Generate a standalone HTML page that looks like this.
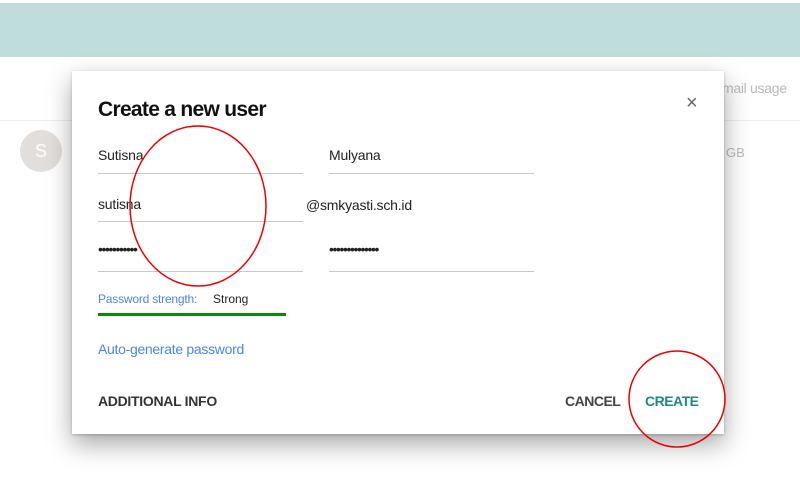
<!DOCTYPE html>
<html><head><meta charset="utf-8"><style>
*{margin:0;padding:0;box-sizing:border-box}
body{width:800px;height:481px;overflow:hidden;background:#fff;position:relative;font-family:"Liberation Sans",sans-serif}
.a{position:absolute;white-space:nowrap}
.ln{position:absolute;height:1px;background:#c8c8c8}
.t{font-size:14px;color:#222;letter-spacing:-0.2px}
</style></head><body>
<div class="a" style="left:0;top:3px;width:800px;height:54px;background:#bfdedb"></div>
<div class="a" style="left:0;top:120px;width:800px;height:1px;background:#eee"></div>
<div class="a" style="left:20px;top:130px;width:42px;height:42px;border-radius:50%;background:#e2dedb;color:#fff;font-size:18px;text-align:center;line-height:42px">S</div>
<div class="a" style="left:722px;top:80px;font-size:14px;color:#bbb;letter-spacing:-0.3px">mail usage</div>
<div class="a" style="left:726px;top:145px;font-size:13px;color:#bbb">GB</div>
<div class="a" style="left:72px;top:71px;width:652px;height:363px;background:#fff;box-shadow:0 10px 24px rgba(0,0,0,.35),0 1px 3px rgba(0,0,0,.2)"></div>
<div class="a" style="left:98px;top:98px;font-size:21px;font-weight:bold;color:#111;letter-spacing:-0.7px">Create a new user</div>
<div class="a" style="left:686px;top:92px;font-size:20px;color:#666">×</div>
<div class="a t" style="left:98px;top:147px">Sutisna</div>
<div class="ln" style="left:98px;top:173px;width:205px"></div>
<div class="a t" style="left:329px;top:147px">Mulyana</div>
<div class="ln" style="left:329px;top:173px;width:205px"></div>
<div class="a t" style="left:98px;top:196px">sutisna</div>
<div class="ln" style="left:98px;top:221px;width:205px"></div>
<div class="a t" style="left:306px;top:197px">@smkyasti.sch.id</div>
<div class="a t" style="left:98px;top:241px;font-size:14px;letter-spacing:-1.4px">•••••••••••</div>
<div class="ln" style="left:98px;top:271px;width:205px"></div>
<div class="a t" style="left:329px;top:241px;font-size:14px;letter-spacing:-1.4px">••••••••••••••</div>
<div class="ln" style="left:329px;top:271px;width:205px"></div>
<div class="a" style="left:98px;top:292px;font-size:12px;color:#4a86e8;letter-spacing:-0.2px">Password strength:</div>
<div class="a" style="left:213px;top:292px;font-size:12px;color:#222">Strong</div>
<div class="a" style="left:98px;top:313px;width:188px;height:3px;background:#0a8a0a"></div>
<div class="a" style="left:98px;top:341px;font-size:14px;color:#4a86e8;letter-spacing:-0.3px">Auto-generate password</div>
<div class="a" style="left:98px;top:393px;font-size:14px;font-weight:bold;color:#333;letter-spacing:-0.3px">ADDITIONAL INFO</div>
<div class="a" style="left:565px;top:393px;font-size:14px;font-weight:bold;color:#444;letter-spacing:-0.5px">CANCEL</div>
<div class="a" style="left:645px;top:393px;font-size:14px;font-weight:bold;color:#1f8a80;letter-spacing:-0.5px">CREATE</div>
<svg class="a" style="left:0;top:0" width="800" height="481">
<ellipse cx="198" cy="206" rx="68" ry="80" fill="none" stroke="#e00" stroke-width="1.5"/>
<circle cx="677" cy="399" r="48" fill="none" stroke="#e00" stroke-width="1.5"/>
</svg>
</body></html>
